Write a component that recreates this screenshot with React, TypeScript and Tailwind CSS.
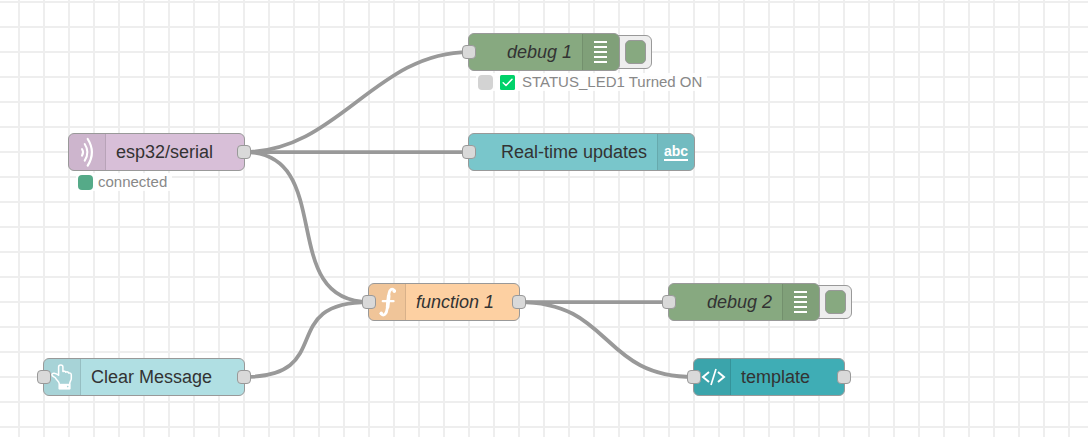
import type { ReactNode } from 'react';

type WirePoint = { x: number; y: number };

const wires: { from: WirePoint; to: WirePoint }[] = [
  { from: { x: 244, y: 152 }, to: { x: 469, y: 52 } },
  { from: { x: 244, y: 152 }, to: { x: 469, y: 152 } },
  { from: { x: 244, y: 152 }, to: { x: 369, y: 302 } },
  { from: { x: 244, y: 377 }, to: { x: 369, y: 302 } },
  { from: { x: 519, y: 302 }, to: { x: 669, y: 302 } },
  { from: { x: 519, y: 302 }, to: { x: 694, y: 377 } },
];

const CURVE = 94;

function Wires() {
  return (
    <svg className="absolute inset-0 h-full w-full" fill="none" stroke="#999" strokeWidth="3.75" aria-hidden="true">
      {wires.map(({ from, to }) => (
        <path
          key={`${from.x}-${from.y}-${to.x}-${to.y}`}
          d={`M${from.x} ${from.y}C${from.x + CURVE} ${from.y} ${to.x - CURVE} ${to.y} ${to.x} ${to.y}`}
        />
      ))}
    </svg>
  );
}

function Port({ side }: { side: 'left' | 'right' }) {
  return (
    <span
      className={`absolute top-[11px] size-3.5 rounded-sm border border-[#999] bg-[#d9d9d9] ${
        side === 'left' ? '-left-[7px]' : '-right-[7px]'
      }`}
    />
  );
}

type FlowNodeProps = {
  place: string;
  fill: string;
  label: string;
  icon: ReactNode;
  iconSide?: 'left' | 'right';
  italic?: boolean;
  input?: boolean;
  output?: boolean;
  button?: boolean;
  children?: ReactNode;
};

function FlowNode({ place, fill, label, icon, iconSide = 'left', italic, input, output, button, children }: FlowNodeProps) {
  const right = iconSide === 'right';
  return (
    <div className={`absolute ${place}`}>
      {button && (
        <button
          type="button"
          aria-label={`Toggle ${label}`}
          className="absolute -right-8 top-0.5 flex h-[34px] w-10 items-center justify-end rounded-md border border-[#999] bg-[#eee] pr-[5px]"
        >
          <span className="h-6 w-[21px] rounded-[5px] border border-[#999] bg-[#87a980]" />
        </button>
      )}
      <div
        className={`relative flex h-[38px] items-stretch rounded-md border border-[#999] ${fill} ${
          right ? 'flex-row-reverse' : ''
        }`}
      >
        <span
          className={`flex w-[37px] shrink-0 items-center justify-center border-black/10 bg-black/5 text-white ${
            right ? 'rounded-r-[5px] border-l' : 'rounded-l-[5px] border-r'
          }`}
        >
          {icon}
        </span>
        <span
          className={`flex-1 self-center whitespace-nowrap px-[10px] text-[18px] leading-6 text-[#333] ${
            right ? 'text-right' : ''
          } ${italic ? 'italic' : ''}`}
        >
          {label}
        </span>
        {input && <Port side="left" />}
        {output && <Port side="right" />}
      </div>
      {children}
    </div>
  );
}

function Status({ dot, children }: { dot: string; children: ReactNode }) {
  return (
    <div className="absolute left-2 top-10 flex h-[18px] items-center gap-[5px] whitespace-nowrap bg-white/90 pl-0.5 pr-[5px] text-[15px] leading-[18px] text-[#888]">
      <span className={`size-[15px] shrink-0 rounded ${dot}`} />
      {children}
    </div>
  );
}

function SerialIcon() {
  return (
    <svg width="36" height="36" viewBox="0 0 36 36" fill="none" stroke="currentColor" strokeLinecap="round">
      <path d="M13 15q2.200 3.300 0 6.600" strokeWidth="2" />
      <path d="M15.700 10q5.400 8.300 0 16.600" strokeWidth="2" />
      <path d="M18.700 5q8.400 13.300 0 26.600" strokeWidth="2.200" />
    </svg>
  );
}

function DebugIcon() {
  return (
    <svg width="36" height="36" viewBox="0 0 36 36" fill="none" stroke="currentColor" strokeWidth="2">
      <path d="M11 8h13M11 13h13M11 18h13M11 23h13M11 28h13" />
    </svg>
  );
}

function TextIcon() {
  return <span className="border-b-2 border-white text-sm leading-4 font-bold">abc</span>;
}

function FunctionIcon() {
  return (
    <svg width="36" height="36" viewBox="0 0 36 36" fill="none" stroke="currentColor" strokeLinecap="round">
      <path d="M25.600 6.600C23 3.800 20.500 5.500 20 9.500L18.200 24.500C17.600 30 15 32.500 12 29.800" strokeWidth="2.800" />
      <path d="M19.700 12L18.600 23" strokeWidth="3.600" />
      <circle cx="25.300" cy="7.200" r="1.700" fill="currentColor" stroke="none" />
      <circle cx="12.300" cy="29.300" r="1.700" fill="currentColor" stroke="none" />
      <path d="M13.800 17.200h10.700" strokeWidth="2.300" />
    </svg>
  );
}

function HandIcon() {
  return (
    <svg width="36" height="36" viewBox="0 0 36 36" fill="none" stroke="currentColor" strokeLinejoin="round">
      <path
        d="M15.300 25C15.300 22.500 12.800 21.500 11.700 19.200C10.500 17.800 7.700 17.500 7.900 15.500C8.200 13.600 11.500 13.700 14.600 16.200V8C14.600 5.200 18.900 5.200 18.900 8V12.500C20 11.900 21.500 12.200 21.800 13.200C23 12.500 24.400 12.900 24.700 14C26.300 13.600 27.300 14.500 27.300 16V19.500C27.300 21.500 25.700 22.500 25.700 25V29.700H15.300Z"
        strokeWidth="1.500"
      />
      <path d="M14.800 24.800h11.500v5.400H14.800z" fill="currentColor" stroke="none" />
      <circle cx="23.700" cy="27.600" r=".8" fill="#a7d4d8" stroke="none" />
    </svg>
  );
}

function TemplateIcon() {
  return (
    <svg width="36" height="36" viewBox="0 0 36 36" fill="none" stroke="currentColor" strokeWidth="2">
      <path d="M15 13l-6 5 6 5M24 13l6 5-6 5" />
      <path d="M22 10l-5 16" strokeWidth="1.700" />
    </svg>
  );
}

function CheckMark() {
  return (
    <svg className="mx-0.5" width="15" height="15" viewBox="0 0 15 15" role="img" aria-label="Success">
      <rect width="15" height="15" rx="1.500" fill="#00d26a" />
      <path d="M3.200 7.800l2.800 2.700 6-6.300" fill="none" stroke="#fff" strokeWidth="1.500" strokeLinecap="round" strokeLinejoin="round" />
    </svg>
  );
}

export default function App() {
  return (
    <main className="relative min-h-screen w-full overflow-hidden bg-white bg-[linear-gradient(to_right,#eee_2px,transparent_2px),linear-gradient(to_bottom,#eee_2px,transparent_2px)] bg-[length:25px_25px] bg-[position:18px_1px] font-['Liberation_Sans',Arial,sans-serif]">
      <Wires />
      <FlowNode place="left-[468px] top-[33px] w-[152px]" fill="bg-[#87a980]" label="debug 1" icon={<DebugIcon />} iconSide="right" italic input button>
        <Status dot="bg-[#d3d3d3]">
          <CheckMark />
          <span>STATUS_LED1 Turned ON</span>
        </Status>
      </FlowNode>
      <FlowNode place="left-[68px] top-[133px] w-[177px]" fill="bg-[#d8bfd8]" label="esp32/serial" icon={<SerialIcon />} output>
        <Status dot="bg-[#5a8]">
          <span>connected</span>
        </Status>
      </FlowNode>
      <FlowNode place="left-[468px] top-[133px] w-[227px]" fill="bg-[#79c6cb]" label="Real-time updates" icon={<TextIcon />} iconSide="right" input />
      <FlowNode place="left-[368px] top-[283px] w-[152px]" fill="bg-[#fdd0a2]" label="function 1" icon={<FunctionIcon />} italic input output />
      <FlowNode place="left-[668px] top-[283px] w-[152px]" fill="bg-[#87a980]" label="debug 2" icon={<DebugIcon />} iconSide="right" italic input button />
      <FlowNode place="left-[43px] top-[358px] w-[202px]" fill="bg-[#b0dfe3]" label="Clear Message" icon={<HandIcon />} input output />
      <FlowNode place="left-[693px] top-[358px] w-[152px]" fill="bg-[#3fadb5]" label="template" icon={<TemplateIcon />} input output />
    </main>
  );
}
